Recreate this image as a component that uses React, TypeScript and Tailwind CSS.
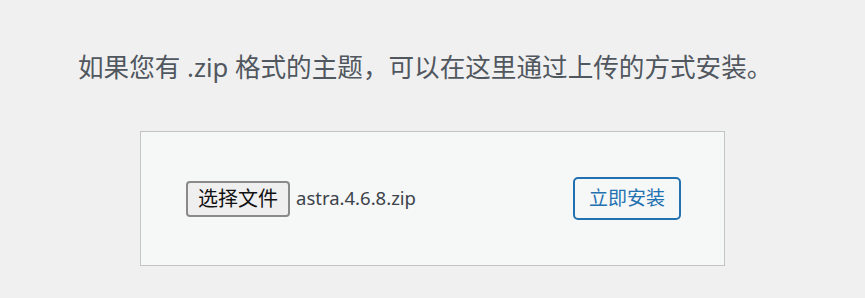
export default function App() {
  const font = { fontFamily: '"Noto Sans", "Noto Sans CJK SC", sans-serif' };
  return (
    <div className="w-full h-[298px] bg-[#f0f0f1] overflow-hidden" style={font}>
      <div className="pt-[48px] pl-[78px] text-[25.6px] leading-[40px] text-[#50575e] whitespace-nowrap">
        如果您有 .zip 格式的主题，可以在这里通过上传的方式安装。
      </div>
      <div className="mt-[43px] ml-[140px] w-[585px] h-[135px] border border-[#c3c4c7] bg-[#f6f7f7] flex items-center justify-between pl-[45px] pr-[43px]">
        <div className="flex items-center gap-[6px]">
          <button className="h-[36px] w-[104px] border-2 border-[#8a8a8a] rounded-[4px] bg-[#efefef] text-[20px] text-[#111] flex items-center justify-center leading-none">
            选择文件
          </button>
          <span className="text-[18.5px] text-[#3c434a] leading-none">astra.4.6.8.zip</span>
        </div>
        <button className="h-[43px] w-[108px] border-2 border-[#2271b1] rounded-[5px] bg-[#f6f7f7] text-[19px] text-[#2271b1] flex items-center justify-center leading-none">
          立即安装
        </button>
      </div>
    </div>
  );
}
